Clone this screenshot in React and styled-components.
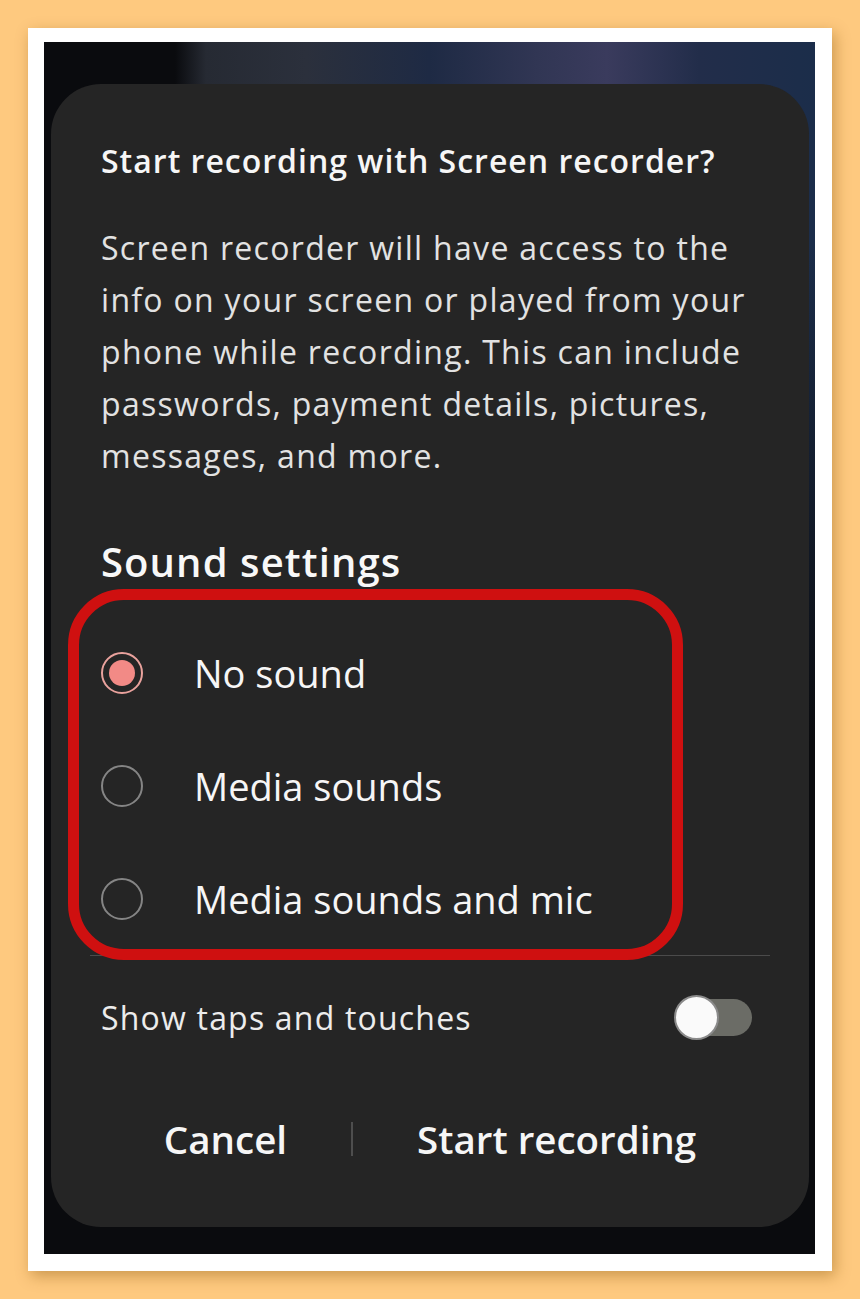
import React, { useState } from 'react';
import styled, { createGlobalStyle } from 'styled-components';

const GlobalStyle = createGlobalStyle`
  html, body {
    margin: 0;
    padding: 0;
    background: #fec97f;
  }
  body {
    font-family: 'Open Sans', 'Noto Sans', sans-serif;
  }
`;

const Page = styled.div`
  width: 860px;
  height: 1299px;
  padding: 28px;
  box-sizing: border-box;
  background: #fec97f;
`;

const Frame = styled.div`
  width: 804px;
  height: 1243px;
  box-sizing: border-box;
  padding: 14px 17px 17px 16px;
  background: #ffffff;
  box-shadow: 3px 5px 14px rgba(140, 90, 20, 0.45);
`;

const Screen = styled.div`
  height: 100%;
  box-sizing: border-box;
  padding: 42px 6px 27px 7px;
  background:
    linear-gradient(to bottom, rgba(10, 11, 14, 0) 0px, rgba(10, 11, 14, 0) 200px, #0a0b0e 700px),
    linear-gradient(
      90deg,
      #0a0b0e 0%,
      #0a0b0e 17%,
      #262a33 21%,
      #2b303c 34%,
      #1e2a44 50%,
      #313654 64%,
      #3a3b5d 73%,
      #222d4a 85%,
      #1b2d4a 100%
    );
`;

const Dialog = styled.div`
  height: 100%;
  box-sizing: border-box;
  background: #252525;
  border-radius: 50px;
  padding-top: 57px;
  display: flex;
  flex-direction: column;
  color: #f4f4f4;
`;

const Title = styled.h1`
  margin: 0 40px 0 50px;
  font-size: 32px;
  line-height: 40px;
  font-weight: 600;
  letter-spacing: 1px;
  color: #f6f6f6;
`;

const Body = styled.p`
  margin: 41px 40px 0 50px;
  font-size: 32px;
  line-height: 52px;
  font-weight: 400;
  letter-spacing: 1.3px;
  color: #e2e2e2;
`;

const SectionTitle = styled.h2`
  margin: 55px 50px 0;
  font-size: 40px;
  line-height: 50px;
  font-weight: 600;
  letter-spacing: 1.1px;
  color: #f8f8f8;
`;

const RadioList = styled.div`
  position: relative;
  margin-top: 29px;
`;

const Highlight = styled.div`
  position: absolute;
  left: 17px;
  top: -27px;
  width: 615px;
  height: 371px;
  box-sizing: border-box;
  border: 11px solid #cf1010;
  border-radius: 56px;
  pointer-events: none;
`;

const RadioRow = styled.label`
  height: 113px;
  display: flex;
  align-items: center;
  padding-left: 50px;
  gap: 51px;
  cursor: pointer;
`;

const RadioCircle = styled.span`
  width: 42px;
  height: 42px;
  box-sizing: border-box;
  border-radius: 50%;
  border: 2px solid ${(p) => (p.$checked ? '#e9a29d' : '#858585')};
  display: flex;
  align-items: center;
  justify-content: center;

  &::after {
    content: '';
    width: 26px;
    height: 26px;
    border-radius: 50%;
    background: #f28a86;
    display: ${(p) => (p.$checked ? 'block' : 'none')};
  }
`;

const RadioLabel = styled.span`
  font-size: 38px;
  line-height: 50px;
  font-weight: 400;
  color: #f6f6f6;
`;

const Divider = styled.hr`
  margin: 0 39px;
  border: none;
  height: 1px;
  background: #4b4b4b;
`;

const ToggleRow = styled.div`
  height: 122px;
  display: flex;
  align-items: center;
  justify-content: space-between;
  padding: 0 57px 0 50px;
`;

const ToggleLabel = styled.span`
  font-size: 32px;
  line-height: 44px;
  letter-spacing: 1.2px;
  color: #ececec;
  margin-top: 2px;
`;

const Track = styled.span`
  position: relative;
  width: 77px;
  height: 37px;
  border-radius: 19px;
  background: #6b6c66;
  display: block;
`;

const Thumb = styled.span`
  position: absolute;
  left: -1px;
  top: -4px;
  width: 45px;
  height: 45px;
  box-sizing: border-box;
  border-radius: 50%;
  background: #fafafa;
  border: 2px solid #8a8a8a;
`;

const Actions = styled.div`
  height: 122px;
  display: flex;
  align-items: center;
  justify-content: center;
  gap: 64px;
`;

const ActionButton = styled.button`
  background: none;
  border: none;
  padding: 0;
  font-family: inherit;
  font-size: 38.5px;
  line-height: 50px;
  font-weight: 600;
  color: #f6f6f6;
`;

const ActionSeparator = styled.span`
  width: 2px;
  height: 34px;
  background: #4e4e4e;
`;

const options = ['No sound', 'Media sounds', 'Media sounds and mic'];

export default function App() {
  const [selected, setSelected] = useState(0);

  return (
    <>
      <GlobalStyle />
      <Page>
        <Frame>
          <Screen>
            <Dialog>
              <Title>Start recording with Screen recorder?</Title>
              <Body>
                Screen recorder will have access to the info on your screen or played
                from your phone while recording. This can include passwords, payment
                details, pictures, messages, and more.
              </Body>
              <SectionTitle>Sound settings</SectionTitle>
              <RadioList>
                {options.map((label, i) => (
                  <RadioRow key={label} onClick={() => setSelected(i)}>
                    <RadioCircle $checked={selected === i} />
                    <RadioLabel>{label}</RadioLabel>
                  </RadioRow>
                ))}
                <Highlight />
              </RadioList>
              <Divider />
              <ToggleRow>
                <ToggleLabel>Show taps and touches</ToggleLabel>
                <Track>
                  <Thumb />
                </Track>
              </ToggleRow>
              <Actions>
                <ActionButton>Cancel</ActionButton>
                <ActionSeparator />
                <ActionButton>Start recording</ActionButton>
              </Actions>
            </Dialog>
          </Screen>
        </Frame>
      </Page>
    </>
  );
}
